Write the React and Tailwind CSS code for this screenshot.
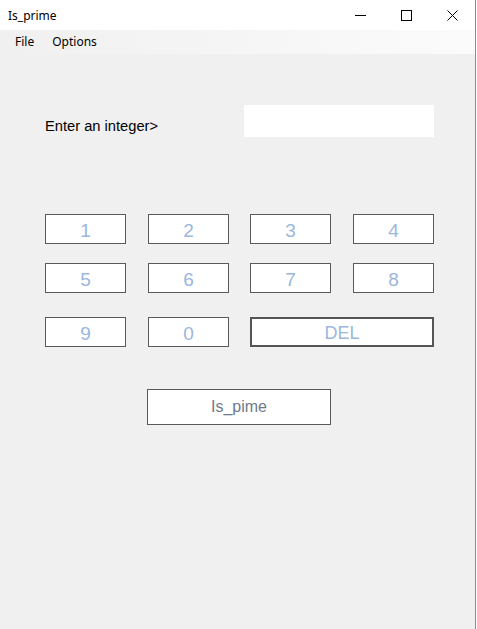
import React from 'react';

const KeyButton = ({ label, className = '' }) => (
  <button
    className={`h-[30px] w-[81px] border border-[#5a5a5a] bg-white text-[19px] leading-none text-[#9ab7dc] ${className}`}
  >
    <span className="relative top-[1px]">{label}</span>
  </button>
);

const TitleBar = () => (
  <div className="flex h-[30px] items-center bg-white">
    <span className="pl-[8px] pt-[1px] text-[12px] text-black" style={{ fontFamily: '"Noto Sans", sans-serif' }}>
      Is_prime
    </span>
    <div className="ml-auto flex h-full">
      {/* minimize */}
      <div className="flex h-full w-[46px] items-center justify-center">
        <svg width="11" height="11" viewBox="0 0 11 11">
          <line x1="0" y1="5.5" x2="11" y2="5.5" stroke="#000" strokeWidth="1" />
        </svg>
      </div>
      {/* maximize */}
      <div className="flex h-full w-[46px] items-center justify-center">
        <svg width="11" height="11" viewBox="0 0 11 11">
          <rect x="0.5" y="0.5" width="10" height="10" fill="none" stroke="#000" strokeWidth="1" />
        </svg>
      </div>
      {/* close */}
      <div className="flex h-full w-[46px] items-center justify-center">
        <svg width="11" height="11" viewBox="0 0 11 11">
          <path d="M0.5 0.5 L10.5 10.5 M10.5 0.5 L0.5 10.5" stroke="#000" strokeWidth="1" fill="none" />
        </svg>
      </div>
    </div>
  </div>
);

const MenuBar = () => (
  <div
    className="flex h-[24px] items-center bg-gradient-to-r from-[#f0f0f0] to-[#fbfbfb] text-[12px] text-black"
    style={{ fontFamily: '"Noto Sans", sans-serif' }}
  >
    <span className="ml-[15px]">File</span>
    <span className="ml-[18px]">Options</span>
  </div>
);

export default function App() {
  return (
    <div className="flex h-[629px] w-[477px] bg-white" style={{ fontFamily: '"Liberation Sans", Arial, sans-serif' }}>
      <div className="flex w-[475px] flex-col bg-[#f0f0f0]">
        <TitleBar />
        <MenuBar />

        <div className="flex flex-col pl-[45px]">
          {/* input row */}
          <div className="mt-[51px] flex">
            <span className="w-[199px] pt-[13px] text-[14.7px] leading-[17px] text-black">Enter an integer&gt;</span>
            <div className="h-[32px] w-[190px] bg-white" />
          </div>

          {/* keypad */}
          <div className="mt-[77px] flex">
            <KeyButton label="1" />
            <KeyButton label="2" className="ml-[22px]" />
            <KeyButton label="3" className="ml-[21px]" />
            <KeyButton label="4" className="ml-[22px]" />
          </div>
          <div className="mt-[19px] flex">
            <KeyButton label="5" />
            <KeyButton label="6" className="ml-[22px]" />
            <KeyButton label="7" className="ml-[21px]" />
            <KeyButton label="8" className="ml-[22px]" />
          </div>
          <div className="mt-[24px] flex">
            <KeyButton label="9" />
            <KeyButton label="0" className="ml-[22px]" />
            <button className="ml-[21px] h-[30px] w-[184px] border-2 border-[#555555] bg-white text-[18px] leading-none text-[#9ab7dc]">
              <span className="relative top-[1px]">DEL</span>
            </button>
          </div>

          <button className="ml-[102px] mt-[42px] h-[36px] w-[184px] border border-[#5a5a5a] bg-white text-[16px] text-[#6e7a8c]">
            Is_pime
          </button>
        </div>
      </div>
      <div className="w-[1px] bg-[#8c8c8c]" />
    </div>
  );
}
